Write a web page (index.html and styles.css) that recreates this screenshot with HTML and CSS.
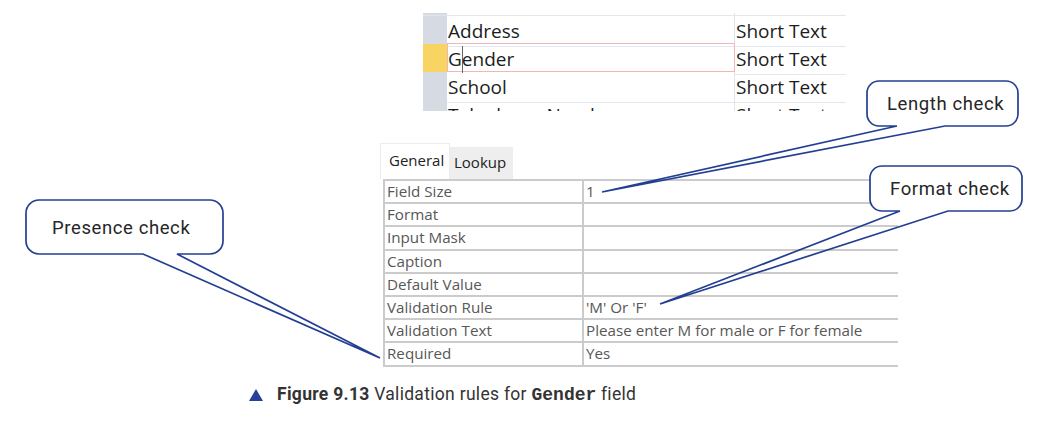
FILE: index.html
```html
<!DOCTYPE html>
<html>
<head>
<meta charset="utf-8">
<link rel="stylesheet" href="styles.css">
</head>
<body>
<div class="page">
  <div class="snippet">
    <div class="srow partial-top"><div class="sel"></div><div class="name"></div><div class="type"></div></div>
    <div class="srow"><div class="sel"></div><div class="name">Address</div><div class="type">Short Text</div></div>
    <div class="srow current"><div class="sel"></div><div class="name">G<span class="cursor"></span>ender</div><div class="type">Short Text</div></div>
    <div class="srow"><div class="sel"></div><div class="name">School</div><div class="type">Short Text</div></div>
    <div class="srow"><div class="sel"></div><div class="name">Telephone Number</div><div class="type">Short Text</div></div>
  </div>

  <div class="props">
    <div class="tabs">
      <div class="tab active">General</div>
      <div class="tab">Lookup</div>
    </div>
    <div class="grid">
      <div class="prow"><div class="pk">Field Size</div><div class="pv">1</div></div>
      <div class="prow"><div class="pk">Format</div><div class="pv"></div></div>
      <div class="prow"><div class="pk">Input Mask</div><div class="pv"></div></div>
      <div class="prow"><div class="pk">Caption</div><div class="pv"></div></div>
      <div class="prow"><div class="pk">Default Value</div><div class="pv"></div></div>
      <div class="prow"><div class="pk">Validation Rule</div><div class="pv">'M' Or 'F'</div></div>
      <div class="prow"><div class="pk">Validation Text</div><div class="pv">Please enter M for male or F for female</div></div>
      <div class="prow"><div class="pk">Required</div><div class="pv">Yes</div></div>
    </div>
  </div>

  <p class="caption"><svg class="tri" width="14" height="12" viewBox="0 0 14 12"><polygon points="7,0 14,12 0,12" fill="#27409a"/></svg><span class="fig">Figure 9.13</span> Validation rules for <span class="code">Gender</span> field</p>

  <svg class="callouts" width="1040" height="425" viewBox="0 0 1040 425">
    <g fill="#fff" stroke="none">
      <rect x="867" y="81" width="151" height="45" rx="12"/>
      <rect x="870" y="166" width="152" height="45" rx="12"/>
      <rect x="26" y="200" width="197" height="54" rx="13"/>
    </g>
    <g fill="none" stroke="#233f93" stroke-width="1.7" stroke-linejoin="miter">
      <path d="M897 126 H879 A12 12 0 0 1 867 114 V93 A12 12 0 0 1 879 81 H1006 A12 12 0 0 1 1018 93 V114 A12 12 0 0 1 1006 126 H945 L602 192 Z"/>
      <path d="M900 211 H882 A12 12 0 0 1 870 199 V178 A12 12 0 0 1 882 166 H1010 A12 12 0 0 1 1022 178 V199 A12 12 0 0 1 1010 211 H948 L660 304 Z"/>
      <path d="M143 254 H39 A13 13 0 0 1 26 241 V213 A13 13 0 0 1 39 200 H210 A13 13 0 0 1 223 213 V241 A13 13 0 0 1 210 254 H177 L380 358 Z"/>
    </g>
    <g class="ctext">
      <text x="887" y="110">Length check</text>
      <text x="890" y="195">Format check</text>
      <text x="52" y="234">Presence check</text>
    </g>
  </svg>
</div>
</body>
</html>
```

FILE: styles.css
```css
* { box-sizing: border-box; }
html, body { margin: 0; padding: 0; background: #fff; }
.page {
  position: relative;
  width: 1040px;
  height: 425px;
  overflow: hidden;
  display: flex;
  flex-direction: column;
}

/* top datasheet snippet */
.snippet {
  margin: 13px 0 0 423px;
  width: 423px;
  height: 98px;
  overflow: hidden;
  display: flex;
  flex-direction: column;
  font-family: "Open Sans", "Noto Sans", sans-serif;
  font-size: 19px;
  color: #1c1c1c;
}
.srow {
  display: grid;
  grid-template-columns: 24px 288px 111px;
  height: 28px;
  flex: none;
}
.srow.partial-top { height: 3px; }
.sel {
  background: #d6dbe3;
  border-bottom: 1px solid #e2e6ec;
}
.current .sel { background: #f8d463; border-bottom-color: #f8d463; }
.name, .type {
  padding-left: 1px;
  line-height: 30px;
  border-bottom: 1px solid #e3e6ee;
  white-space: nowrap;
}
.name { border-right: 1px solid #e0e4eb; }
.current .name {
  position: relative;
  z-index: 1;
  margin-top: -1px;
  height: 29px;
  border: 1px solid #f2b6b6;
  padding-left: 0;
}
.cursor {
  display: inline-block;
  width: 1px;
  height: 27px;
  background: #666;
  vertical-align: -7px;
  margin-right: -1px;
}

/* property sheet */
.props {
  margin: 32px 0 0 380px;
  display: flex;
  flex-direction: column;
  font-family: "Open Sans", "Noto Sans", sans-serif;
}
.tabs {
  display: flex;
  align-items: flex-end;
  height: 36px;
}
.tab {
  font-size: 15px;
  color: #222;
  height: 32px;
  line-height: 30px;
  padding: 0 4px;
  background: #eeeeee;
  width: 63px;
}
.tab.active {
  background: #fff;
  border: 1px solid #ececec;
  border-bottom: none;
  height: 36px;
  line-height: 32px;
  width: 70px;
  padding-left: 8px;
}
.grid {
  margin-left: 3px;
  width: 515px;
  border-top: 2px solid #cbcbcb;
  border-left: 2px solid #cbcbcb;
  display: flex;
  flex-direction: column;
}
.prow {
  display: grid;
  grid-template-columns: 199px 1fr;
  height: 23.2px;
  border-bottom: 2px solid #cbcbcb;
  font-size: 15.2px;
  color: #575757;
}
.pk {
  padding-left: 2px;
  line-height: 21px;
  border-right: 2px solid #cbcbcb;
  white-space: nowrap;
}
.pv {
  padding-left: 2px;
  line-height: 21px;
  white-space: nowrap;
}

/* caption */
.caption {
  margin: 16px 0 0 249px;
  height: 22px;
  line-height: 22px;
  white-space: nowrap;
  font-family: Roboto, "Noto Sans", sans-serif;
  font-size: 17.5px;
  letter-spacing: 0.3px;
  color: #333;
}
.tri { margin-right: 14px; vertical-align: -1px; }
.fig { font-weight: 700; letter-spacing: 0.3px; }
.code {
  font-family: "Liberation Mono", "DejaVu Sans Mono", monospace;
  font-weight: 700;
  font-size: 18px;
  letter-spacing: 0;
}

/* callouts overlay */
.callouts {
  position: absolute;
  left: 0;
  top: 0;
  pointer-events: none;
}
.ctext text {
  font-family: Roboto, "Noto Sans", sans-serif;
  font-size: 18.5px;
  fill: #262626;
  letter-spacing: 0.6px;
}
```
